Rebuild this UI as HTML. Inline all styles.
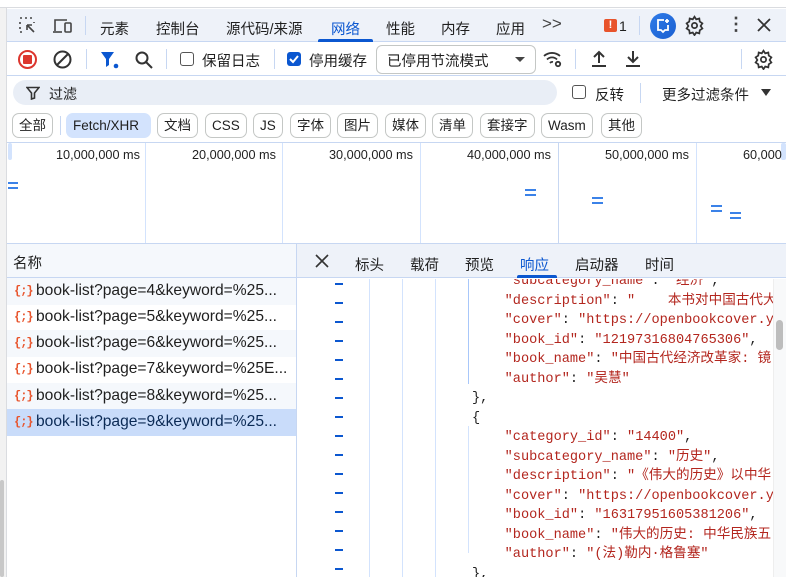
<!DOCTYPE html>
<html><head><meta charset="utf-8"><style>
*{box-sizing:border-box;margin:0;padding:0}
body{width:786px;height:577px;overflow:hidden;background:#fff;position:relative;font-family:"Liberation Sans","Noto Sans CJK SC",sans-serif;font-size:14px;color:#1f1f1f}
.a{position:absolute}
.t{position:absolute;white-space:nowrap}
.btn{position:absolute;top:113px;height:25px;border:1px solid #c4c7c5;border-radius:7px;font-size:13.5px;line-height:23px;padding:0 6px;background:#fff}
.code{font-family:"Liberation Mono","Noto Sans CJK SC",monospace;font-size:13.6px;color:#1f1f1f}
.k{color:#b3261e}
.row{position:absolute;left:7px;width:289px;height:26.5px;font-size:15.6px;line-height:26px;padding-left:29px;white-space:nowrap;overflow:hidden}
.ic{position:absolute;left:7px;top:0;color:#e8542c;font-family:"Liberation Mono",monospace;font-size:12px;font-weight:bold;letter-spacing:-1px}
.dash{position:absolute;left:335px;width:8px;height:2px;background:#0b57d0}
</style></head><body>
<!-- outer chrome -->
<div class="a" style="left:0;top:0;width:786px;height:8px;background:#fff;border-bottom:1px solid #dadce0"></div>
<div class="a" style="left:0;top:8px;width:7px;height:569px;background:#f2f2f2;border-right:1px solid #dadce0"></div>
<div class="a" style="left:0;top:480px;width:4px;height:97px;background:#c8c8c8;border-radius:2px"></div>
<!-- tab bar -->
<div class="a" style="left:7px;top:9px;width:779px;height:33px;background:#eef2f9;border-bottom:1px solid #c7d7f2"></div>
<svg class="a" style="left:18px;top:16px" width="20" height="20" viewBox="0 0 20 20" fill="none" stroke="#444" stroke-width="1.6"><path d="M2 2h2M7 2h2M12 2h2M2 6v2M2 11v2M2 16h2M16 6v1" stroke-dasharray="2 2"/><path d="M16 16L9 9M9 9v5M9 9h5"/></svg>
<svg class="a" style="left:52px;top:16px" width="22" height="20" viewBox="0 0 22 20" fill="none" stroke="#444" stroke-width="1.6"><path d="M3 15V4h12"/><path d="M1 16h9"/><rect x="13" y="7" width="6" height="9" rx="1"/></svg>
<div class="a" style="left:85px;top:16px;width:1px;height:19px;background:#c7d7f2"></div>
<div class="t" style="left:100px;top:18px;font-size:14.5px">元素</div>
<div class="t" style="left:156px;top:18px;font-size:14.5px">控制台</div>
<div class="t" style="left:226px;top:18px;font-size:14.5px">源代码/来源</div>
<div class="t" style="left:331px;top:18px;color:#0b57d0;font-size:14.5px">网络</div>
<div class="a" style="left:318px;top:39px;width:55px;height:3px;background:#0b57d0;border-radius:2px 2px 0 0"></div>
<div class="t" style="left:386px;top:18px;font-size:14.5px">性能</div>
<div class="t" style="left:441px;top:18px;font-size:14.5px">内存</div>
<div class="t" style="left:496px;top:18px;font-size:14.5px">应用</div>
<div class="t" style="left:542px;top:14px;font-size:17px;color:#444">&gt;&gt;</div>
<div class="a" style="left:604px;top:19px;width:13px;height:13px;background:#e8542c;border-radius:2px;color:#fff;font-size:11px;font-weight:bold;text-align:center;line-height:13px">!</div>
<div class="t" style="left:619px;top:18px">1</div>
<div class="a" style="left:639px;top:16px;width:1px;height:19px;background:#c7d7f2"></div>
<div class="a" style="left:650px;top:13px;width:26px;height:26px;border-radius:50%;background:linear-gradient(135deg,#2f7be8,#1a5fd0)"></div>
<svg class="a" style="left:655px;top:18px" width="16" height="16" viewBox="0 0 16 16" fill="none" stroke="#fff" stroke-width="1.8"><path d="M9 2H3v10h3l2 2 2-2h3V7"/><path d="M12 1v4M10 3h4"/></svg>
<svg class="a" style="left:684px;top:15px" width="21" height="21" viewBox="0 0 24 24" fill="none" stroke="#333" stroke-width="2"><circle cx="12" cy="12" r="3"/><path d="M12 2l2 3 3.5-1 .5 3.5 3 2-2 3 2 3-3 2-.5 3.5-3.5-1-2 3-2-3-3.5 1-.5-3.5-3-2 2-3-2-3 3-2 .5-3.5 3.5 1z"/></svg>
<div class="t" style="left:727px;top:14px;font-size:18px;font-weight:bold;color:#444">⋮</div>
<svg class="a" style="left:756px;top:17px" width="16" height="16" viewBox="0 0 16 16" stroke="#333" stroke-width="1.8"><path d="M2 2l12 12M14 2L2 14"/></svg>
<!-- toolbar -->
<div class="a" style="left:7px;top:43px;width:779px;height:33px;background:#fff;border-bottom:1px solid #c7d7f2"></div>
<div class="a" style="left:18px;top:50px;width:19px;height:19px;border:2px solid #dc362e;border-radius:50%"></div>
<div class="a" style="left:23px;top:55px;width:9px;height:9px;background:#dc362e;border-radius:1px"></div>
<svg class="a" style="left:52px;top:49px" width="21" height="21" viewBox="0 0 21 21" fill="none" stroke="#333" stroke-width="2"><circle cx="10.5" cy="10.5" r="8"/><path d="M5 16L16 5"/></svg>
<div class="a" style="left:86px;top:49px;width:1px;height:20px;background:#c7d7f2"></div>
<svg class="a" style="left:100px;top:50px" width="20" height="20" viewBox="0 0 20 20"><path d="M1 2h13l-5 7v6l-3 2V9z" fill="#0b57d0"/><circle cx="16" cy="16" r="2.3" fill="#0b57d0"/></svg>
<svg class="a" style="left:134px;top:50px" width="20" height="20" viewBox="0 0 20 20" fill="none" stroke="#333" stroke-width="2"><circle cx="8" cy="8" r="5.5"/><path d="M12 12l6 6"/></svg>
<div class="a" style="left:166px;top:49px;width:1px;height:20px;background:#c7d7f2"></div>
<div class="a" style="left:180px;top:52px;width:14px;height:14px;border:1.5px solid #555;border-radius:3px"></div>
<div class="t" style="left:202px;top:50px;font-size:14.5px">保留日志</div>
<div class="a" style="left:274px;top:49px;width:1px;height:20px;background:#c7d7f2"></div>
<div class="a" style="left:287px;top:52px;width:14px;height:14px;background:#0b57d0;border-radius:3px"></div>
<svg class="a" style="left:287px;top:52px" width="14" height="14" viewBox="0 0 14 14" fill="none" stroke="#fff" stroke-width="2"><path d="M3 7l3 3 5-6"/></svg>
<div class="t" style="left:309px;top:50px;font-size:14.5px">停用缓存</div>
<div class="a" style="left:376px;top:45px;width:160px;height:29px;border:1px solid #c4c7c5;border-radius:6px"></div>
<div class="t" style="left:387px;top:50px;font-size:14.5px">已停用节流模式</div>
<div class="a" style="left:515px;top:57px;border:5px solid transparent;border-top:5px solid #444"></div>
<svg class="a" style="left:542px;top:49px" width="22" height="20" viewBox="0 0 22 20" fill="none" stroke="#333" stroke-width="1.8"><path d="M2 7a12 12 0 0 1 16 0M5 10.5a7 7 0 0 1 10 0M8 14a3 3 0 0 1 3-1"/><circle cx="16" cy="15" r="2.2"/></svg>
<div class="a" style="left:575px;top:49px;width:1px;height:20px;background:#c7d7f2"></div>
<svg class="a" style="left:589px;top:49px" width="20" height="20" viewBox="0 0 20 20" fill="none" stroke="#333" stroke-width="2"><path d="M10 14V3M5 8l5-5 5 5M3 17h14"/></svg>
<svg class="a" style="left:623px;top:49px" width="20" height="20" viewBox="0 0 20 20" fill="none" stroke="#333" stroke-width="2"><path d="M10 2v11M5 8l5 5 5-5M3 17h14"/></svg>
<div class="a" style="left:741px;top:49px;width:1px;height:20px;background:#c7d7f2"></div>
<svg class="a" style="left:753px;top:49px" width="21" height="21" viewBox="0 0 24 24" fill="none" stroke="#333" stroke-width="2"><circle cx="12" cy="12" r="3"/><path d="M12 2l2 3 3.5-1 .5 3.5 3 2-2 3 2 3-3 2-.5 3.5-3.5-1-2 3-2-3-3.5 1-.5-3.5-3-2 2-3-2-3 3-2 .5-3.5 3.5 1z"/></svg>
<!-- filter row -->
<div class="a" style="left:13px;top:80px;width:544px;height:25px;background:#e9eef6;border-radius:13px"></div>
<svg class="a" style="left:26px;top:86px" width="14" height="14" viewBox="0 0 14 14" fill="none" stroke="#333" stroke-width="1.6"><path d="M1 1.5h12L8.5 7v5L5.5 13V7z"/></svg>
<div class="t" style="left:49px;top:84px">过滤</div>
<div class="a" style="left:572px;top:85px;width:14px;height:14px;border:1.5px solid #555;border-radius:3px"></div>
<div class="t" style="left:595px;top:84px;font-size:14.5px">反转</div>
<div class="a" style="left:640px;top:83px;width:1px;height:20px;background:#c7d7f2"></div>
<div class="t" style="left:662px;top:84px;font-size:14.5px">更多过滤条件</div>
<div class="a" style="left:761px;top:89px;border:5px solid transparent;border-top:7px solid #333"></div>
<!-- type buttons -->
<div class="btn" style="left:12px">全部</div>
<div class="a" style="left:60px;top:116px;width:1px;height:19px;background:#c7d7f2"></div>
<div class="btn" style="left:66px;border-color:#d3e3fd;background:#d3e3fd;width:85px">Fetch/XHR</div>
<div class="btn" style="left:157px">文档</div>
<div class="btn" style="left:205px">CSS</div>
<div class="btn" style="left:253px">JS</div>
<div class="btn" style="left:290px">字体</div>
<div class="btn" style="left:337px">图片</div>
<div class="btn" style="left:385px">媒体</div>
<div class="btn" style="left:432px">清单</div>
<div class="btn" style="left:480px">套接字</div>
<div class="btn" style="left:541px">Wasm</div>
<div class="btn" style="left:601px">其他</div>
<!-- overview -->
<div class="a" style="left:7px;top:142px;width:779px;height:1px;background:#c7d7f2"></div>
<div class="a" style="left:7px;top:143px;width:779px;height:100px;background:#fff"></div>
<div class="a" style="left:145px;top:143px;width:1px;height:100px;background:#d3e3fd"></div>
<div class="a" style="left:282px;top:143px;width:1px;height:100px;background:#d3e3fd"></div>
<div class="a" style="left:420px;top:143px;width:1px;height:100px;background:#d3e3fd"></div>
<div class="a" style="left:558px;top:143px;width:1px;height:100px;background:#c7d7f2"></div>
<div class="a" style="left:696px;top:143px;width:1px;height:100px;background:#d3e3fd"></div>
<div class="a" style="left:8px;top:143px;width:4px;height:17px;background:#d3e3fd;border-radius:2px"></div>
<div class="a" style="left:781px;top:143px;width:5px;height:17px;background:#d3e3fd;border-radius:2px"></div>
<div class="t" style="left:56px;top:148px;font-size:12.7px">10,000,000 ms</div>
<div class="t" style="left:192px;top:148px;font-size:12.7px">20,000,000 ms</div>
<div class="t" style="left:329px;top:148px;font-size:12.7px">30,000,000 ms</div>
<div class="t" style="left:467px;top:148px;font-size:12.7px">40,000,000 ms</div>
<div class="t" style="left:605px;top:148px;font-size:12.7px">50,000,000 ms</div>
<div class="t" style="left:743px;top:148px;font-size:12.7px">60,000</div>
<div class="a" style="left:8px;top:182px;width:10px;height:7px;border-top:2px solid #3b82e8;border-bottom:2px solid #3b82e8"></div>
<div class="a" style="left:525px;top:189px;width:11px;height:7px;border-top:2px solid #3b82e8;border-bottom:2px solid #3b82e8"></div>
<div class="a" style="left:592px;top:197px;width:11px;height:7px;border-top:2px solid #3b82e8;border-bottom:2px solid #3b82e8"></div>
<div class="a" style="left:711px;top:205px;width:11px;height:7px;border-top:2px solid #3b82e8;border-bottom:2px solid #3b82e8"></div>
<div class="a" style="left:730px;top:212px;width:11px;height:7px;border-top:2px solid #3b82e8;border-bottom:2px solid #3b82e8"></div>
<!-- split -->
<div class="a" style="left:7px;top:243px;width:779px;height:1px;background:#c7d7f2"></div>
<div class="a" style="left:7px;top:244px;width:289px;height:34px;background:#f5f8fc;border-bottom:1px solid #c7d7f2"></div>
<div class="t" style="left:13px;top:252px;font-size:14.5px">名称</div>
<div class="a" style="left:296px;top:244px;width:1px;height:333px;background:#c7d7f2"></div>
<div class="a" style="left:7px;top:278px;width:289px;height:299px;background:#fff"></div>
<div class="row" style="top:278px;background:#f5f8fc"><span class="ic">{;}</span>book-list?page=4&amp;keyword=%25...</div>
<div class="row" style="top:304px"><span class="ic">{;}</span>book-list?page=5&amp;keyword=%25...</div>
<div class="row" style="top:330px;background:#f5f8fc"><span class="ic">{;}</span>book-list?page=6&amp;keyword=%25...</div>
<div class="row" style="top:356px"><span class="ic">{;}</span>book-list?page=7&amp;keyword=%25E...</div>
<div class="row" style="top:383px;background:#f5f8fc"><span class="ic">{;}</span>book-list?page=8&amp;keyword=%25...</div>
<div class="row" style="top:409px;background:#c9dcfa;color:#0b2a55"><span class="ic">{;}</span>book-list?page=9&amp;keyword=%25...</div>
<!-- right panel -->
<div class="a" style="left:297px;top:244px;width:489px;height:34px;background:#eef2f9;border-bottom:1px solid #c7d7f2"></div>
<svg class="a" style="left:315px;top:254px" width="14" height="14" viewBox="0 0 14 14" stroke="#333" stroke-width="1.6"><path d="M1 1l12 12M13 1L1 13"/></svg>
<div class="t" style="left:355px;top:254px;font-size:14.5px">标头</div>
<div class="t" style="left:410px;top:254px;font-size:14.5px">载荷</div>
<div class="t" style="left:465px;top:254px;font-size:14.5px">预览</div>
<div class="t" style="left:520px;top:254px;color:#0b57d0;font-size:14.5px">响应</div>
<div class="a" style="left:517px;top:275px;width:40px;height:3px;background:#0b57d0;border-radius:2px 2px 0 0"></div>
<div class="t" style="left:575px;top:254px;font-size:14.5px">启动器</div>
<div class="t" style="left:645px;top:254px;font-size:14.5px">时间</div>
<div class="a" style="left:369px;top:279px;width:1px;height:298px;background:#d3e3fd"></div>
<div class="a" style="left:402px;top:279px;width:1px;height:298px;background:#d3e3fd"></div>
<div class="a" style="left:435px;top:279px;width:1px;height:298px;background:#d3e3fd"></div>
<div class="a" style="left:468px;top:279px;width:1px;height:105px;background:#a8c7fa"></div>
<div class="a" style="left:468px;top:426px;width:1px;height:127px;background:#d3e3fd"></div>
<div class="a" style="left:773px;top:279px;width:13px;height:298px;background:#f8f9fa;border-left:1px solid #eee"></div>
<div class="a" style="left:776px;top:320px;width:7px;height:30px;background:#bdbdbd;border-radius:4px"></div>
<div class="dash" style="top:283px"></div><div class="dash" style="top:302px"></div><div class="dash" style="top:321px"></div><div class="dash" style="top:340px"></div><div class="dash" style="top:359px"></div><div class="dash" style="top:378px"></div><div class="dash" style="top:397px"></div><div class="dash" style="top:416px"></div><div class="dash" style="top:435px"></div><div class="dash" style="top:454px"></div><div class="dash" style="top:473px"></div><div class="dash" style="top:492px"></div><div class="dash" style="top:511px"></div><div class="dash" style="top:530px"></div><div class="dash" style="top:549px"></div><div class="dash" style="top:568px"></div>
<div class="a code" style="left:472px;top:279px;width:301px;height:298px;overflow:hidden">
<div style="margin-top:-7px;line-height:19.5px;white-space:pre">    <span class="k">"subcategory_name"</span>: <span class="k">"经济"</span>,
    <span class="k">"description"</span>: <span class="k">"    本书对中国古代大</span>
    <span class="k">"cover"</span>: <span class="k">"https://openbookcover.y</span>
    <span class="k">"book_id"</span>: <span class="k">"12197316804765306"</span>,
    <span class="k">"book_name"</span>: <span class="k">"中国古代经济改革家: 镜</span>
    <span class="k">"author"</span>: <span class="k">"吴慧"</span>
},
{
    <span class="k">"category_id"</span>: <span class="k">"14400"</span>,
    <span class="k">"subcategory_name"</span>: <span class="k">"历史"</span>,
    <span class="k">"description"</span>: <span class="k">"《伟大的历史》以中华</span>
    <span class="k">"cover"</span>: <span class="k">"https://openbookcover.y</span>
    <span class="k">"book_id"</span>: <span class="k">"16317951605381206"</span>,
    <span class="k">"book_name"</span>: <span class="k">"伟大的历史: 中华民族五</span>
    <span class="k">"author"</span>: <span class="k">"(法)勒内·格鲁塞"</span>
},</div></div>
</body></html>
